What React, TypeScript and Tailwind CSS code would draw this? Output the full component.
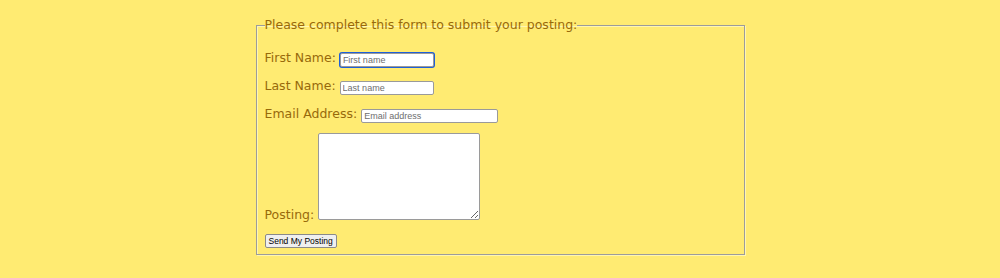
export default function App() {
  const label = "text-[12.5px] leading-[10px] text-[#98690b]";
  const input =
    "h-[14px] border border-[#9a9a9a] rounded-[2px] bg-white px-[2px] text-[9px] text-black placeholder:text-[#6e6e6e] outline-none";
  const arial = { fontFamily: '"Liberation Sans", Arial, sans-serif' };
  return (
    <div
      className="min-h-[278px] w-full bg-[#ffeb72] pt-[16px]"
      style={{ fontFamily: '"DejaVu Sans", Verdana, sans-serif' }}
    >
      <form onSubmit={(e) => e.preventDefault()}>
        <fieldset className="mx-auto w-[489px] border border-[#9c9c9c] px-[8px] pb-[6px] pt-[3px] shadow-[inset_1px_1px_0_#fff6b0,1px_1px_0_#fff6b0]">
          <legend className="px-0 text-[12.5px] leading-[18px] text-[#98690b]">
            Please complete this form to submit your posting:
          </legend>
          <div className="mt-[16px] flex flex-col">
            <div className="flex h-[14px] items-start gap-[4px]">
              <label className={label}>First Name:</label>
              <input
                placeholder="First name"
                className={`${input} w-[94px] border-[#1e5fd8] ring-1 ring-[#1e5fd8]`}
                style={arial}
              />
            </div>
            <div className="mt-[14px] flex h-[14px] items-start gap-[4px]">
              <label className={label}>Last Name:</label>
              <input placeholder="Last name" className={`${input} w-[94px]`} style={arial} />
            </div>
            <div className="mt-[14px] flex h-[14px] items-start gap-[4px]">
              <label className={label}>Email Address:</label>
              <input placeholder="Email address" className={`${input} w-[137px]`} style={arial} />
            </div>
            <div className="mt-[10px] flex items-end gap-[4px]">
              <label className={label}>Posting:</label>
              <textarea className="h-[87px] w-[162px] rounded-[2px] border border-[#9a9a9a] bg-white" />
            </div>
            <div className="mt-[14px] flex">
              <button
                type="submit"
                className="h-[14px] rounded-[2px] border border-[#8a8a8a] bg-[#efefef] px-[3px] text-[8.5px] leading-[12px] text-black"
                style={arial}
              >
                Send My Posting
              </button>
            </div>
          </div>
        </fieldset>
      </form>
    </div>
  );
}
